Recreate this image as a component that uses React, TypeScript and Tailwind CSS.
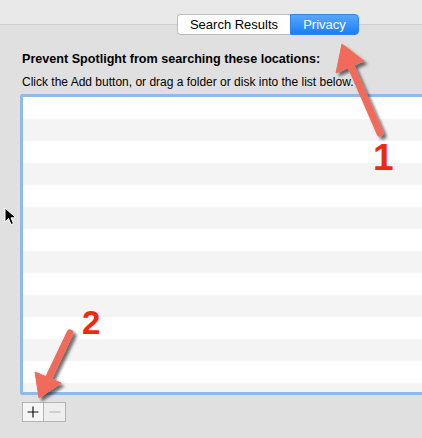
import React from 'react';

const rows = Array.from({ length: 14 }, (_, i) => i);

function Arrows() {
  return (
    <svg className="absolute inset-0 pointer-events-none" width="422" height="438" viewBox="0 0 422 438">
      <defs>
        <filter id="shadow" x="-50%" y="-50%" width="200%" height="200%">
          <feDropShadow dx="3" dy="3" stdDeviation="1.6" floodColor="#000" floodOpacity="0.55" />
        </filter>
      </defs>
      <g filter="url(#shadow)" fill="#f26b5b" stroke="#f26b5b">
        <line x1="380" y1="133" x2="350" y2="64" strokeWidth="7" strokeLinecap="round" />
        <polygon points="342,44 336,73 364,61" strokeWidth="1" strokeLinejoin="round" />
        <line x1="70" y1="333" x2="49" y2="377" strokeWidth="7" strokeLinecap="round" />
        <polygon points="39,398 35,372 61,383" strokeWidth="1" strokeLinejoin="round" />
      </g>
    </svg>
  );
}

function Cursor() {
  return (
    <svg className="absolute left-[4px] top-[207px]" width="14" height="20" viewBox="0 0 14 20">
      <polygon
        points="1,1 1,15 4.5,11.5 7,17.5 9.5,16.5 7,10.8 12,10.8"
        fill="#000"
        stroke="#fff"
        strokeWidth="1"
        strokeLinejoin="round"
      />
    </svg>
  );
}

export default function App() {
  return (
    <div
      className="relative w-[422px] h-[438px] overflow-hidden bg-[linear-gradient(to_bottom,#e9e9e9_0,#e9e9e9_24px,#d0d0d0_24px,#d0d0d0_25px,#e0e0e0_25px)] text-black"
      style={{ fontFamily: '"Liberation Sans", Arial, sans-serif' }}
    >
      <div className="flex flex-col pt-[14px]">
        <div className="ml-[177px] flex h-[21px] w-[182px] text-[13px] leading-[19px]">
          <div className="flex w-[113px] items-center justify-center rounded-l-[4px] border border-r-0 border-[#bdbdbd] bg-white">
            Search Results
          </div>
          <div className="flex w-[69px] items-center justify-center rounded-r-[4px] border border-[#2f86f2] bg-[linear-gradient(to_bottom,#5aa7fb,#1b7ef5)] text-white">
            Privacy
          </div>
        </div>

        <div className="ml-[22px] mt-[16px] text-[12.6px] font-bold leading-[16px]">
          Prevent Spotlight from searching these locations:
        </div>
        <div className="ml-[22px] mt-[8px] text-[12px] leading-[14px]">
          Click the Add button, or drag a folder or disk into the list below.
        </div>

        <div className="ml-[20px] mt-[5px] h-[301px] w-[420px] shrink-0 overflow-hidden rounded-l-[3px] border-[3px] border-r-0 border-[#8ebbec] bg-white">
          {rows.map((i) => (
            <div key={i} className={i % 2 === 0 ? 'h-[22px] bg-white' : 'h-[22px] bg-[#f4f4f4]'} />
          ))}
        </div>

        <div className="ml-[22px] mt-[7px] flex">
          <div className="flex h-[20px] w-[22px] items-center justify-center border border-[#b4b4b4] bg-[#f6f6f6]">
            <svg width="12" height="12" viewBox="0 0 12 12">
              <path d="M6 0.5v11M0.5 6h11" stroke="#111" strokeWidth="1.2" />
            </svg>
          </div>
          <div className="flex h-[20px] w-[22px] items-center justify-center border border-l-0 border-[#b4b4b4] bg-[#eeeeee]">
            <svg width="12" height="12" viewBox="0 0 12 12">
              <path d="M0.5 6h11" stroke="#b8b8b8" strokeWidth="1.2" />
            </svg>
          </div>
        </div>
      </div>

      <Arrows />

      <div className="absolute left-[373px] top-[139px] text-[37px] font-bold leading-none text-[#ee2a0e]">1</div>
      <div className="absolute left-[82px] top-[306px] text-[33px] font-bold leading-none text-[#ee2a0e]">2</div>

      <Cursor />
    </div>
  );
}
